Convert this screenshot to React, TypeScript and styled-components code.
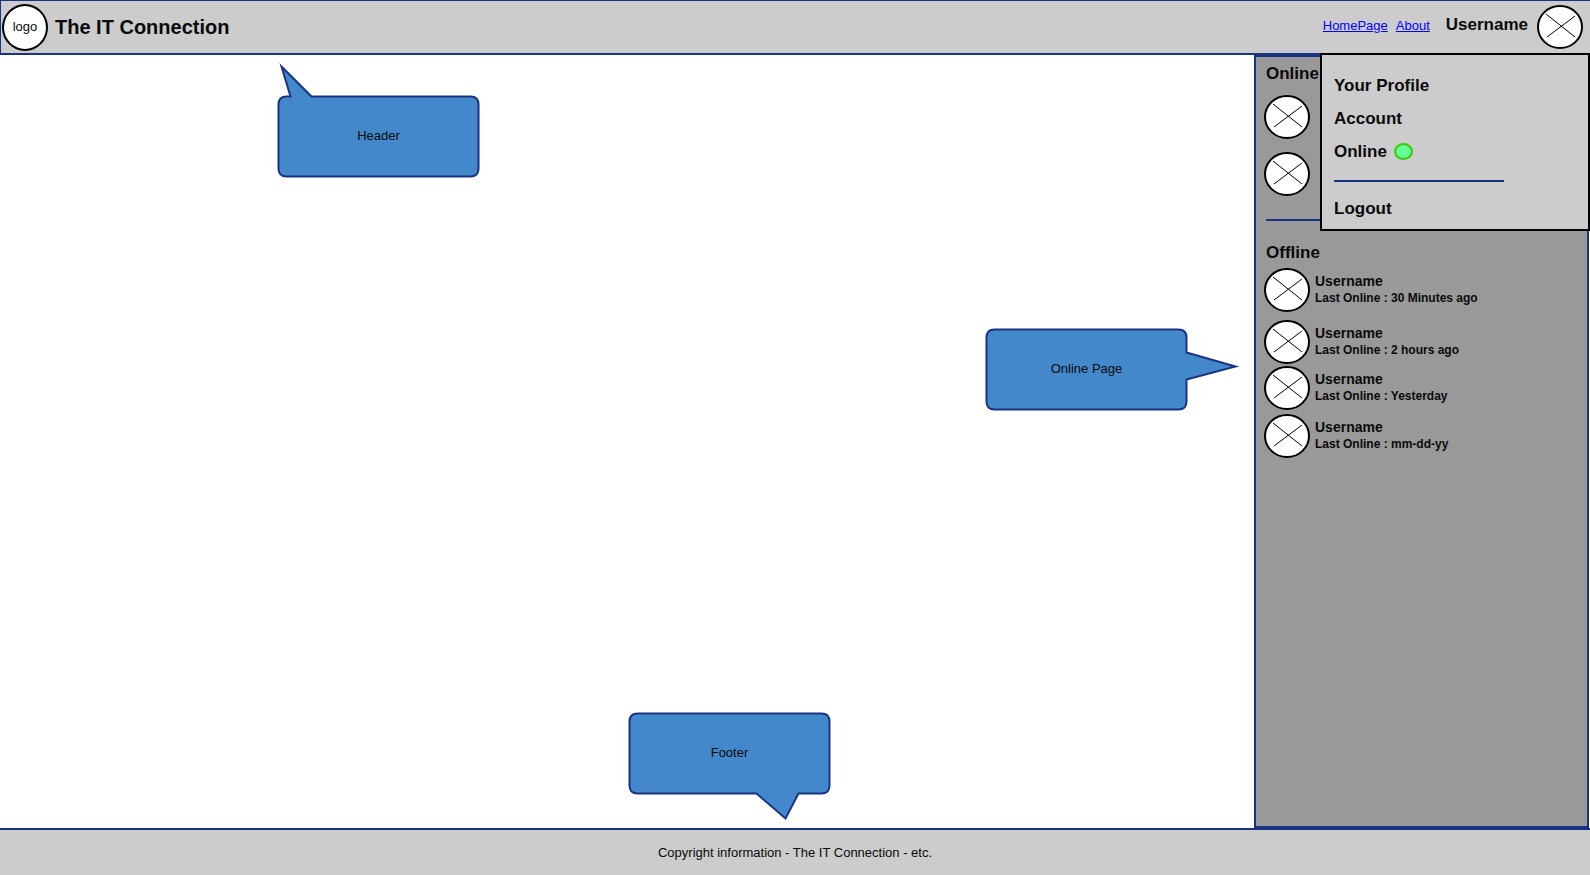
import React from "react";
import styled, { createGlobalStyle } from "styled-components";

const navy = "#1a3282";
const light = "#cccccc";
const grey = "#999999";

const GlobalStyle = createGlobalStyle`
  *, *::before, *::after { box-sizing: border-box; }
  body {
    margin: 0;
    background: #ffffff;
    color: #0a0a0a;
    font-family: "Liberation Sans", Arial, sans-serif;
    font-size: 13px;
    line-height: 16px;
  }
  h1, h2, ul, p { margin: 0; padding: 0; }
  ul { list-style: none; }
  button {
    margin: 0;
    padding: 0;
    border: 0;
    background: none;
    color: inherit;
    font: inherit;
    text-align: left;
    cursor: pointer;
  }
`;

const Page = styled.div`
  display: flex;
  flex-direction: column;
  min-height: 100vh;
`;

const Header = styled.header`
  position: relative;
  z-index: 2;
  display: flex;
  align-items: center;
  height: 55px;
  padding: 0 7px 0 1px;
  background: ${light};
  border: 1px solid ${navy};
  border-right: 0;
  border-bottom-width: 2px;
`;

const Logo = styled.div`
  display: flex;
  align-items: center;
  justify-content: center;
  width: 46px;
  height: 47px;
  border: 2px solid #000000;
  border-radius: 50%;
  background: #ffffff;
`;

const SiteTitle = styled.h1`
  flex: 1;
  margin-left: 7px;
  font-size: 20px;
  line-height: 24px;
`;

const Nav = styled.nav`
  display: flex;
  align-items: baseline;
  gap: 8px;
  padding-bottom: 4px;
`;

const NavLink = styled.a`
  color: #0000ff;
  text-decoration: underline;
`;

const UserButton = styled.button`
  margin-left: 8px;
  font-size: 17px;
  font-weight: bold;
  line-height: 20px;
`;

const AvatarButton = styled.button`
  display: flex;
  margin-left: 9px;
`;

const AvatarSvg = styled.svg`
  display: block;
  flex: none;
`;

const Menu = styled.div`
  position: absolute;
  top: 100%;
  right: 0;
  width: 270px;
  padding: 14px 12px 4px;
  background: ${light};
  border: 2px solid #000000;
`;

const MenuItem = styled.button`
  display: flex;
  align-items: center;
  gap: 7px;
  width: 100%;
  font-size: 17px;
  font-weight: bold;
  line-height: 33px;
`;

const StatusDot = styled.span`
  width: 19px;
  height: 17px;
  border: 2px solid #33cc00;
  border-radius: 50%;
  background: #66ff99;
`;

const MenuRule = styled.hr`
  width: 170px;
  height: 2px;
  margin: 12px 0 10px;
  border: 0;
  background: ${navy};
`;

const Body = styled.div`
  display: flex;
  flex: 1;
`;

const Canvas = styled.main`
  position: relative;
  flex: 1;
`;

const Sidebar = styled.aside`
  width: 335px;
  margin-right: 1px;
  padding: 7px 8px;
  background: ${grey};
  border: 2px solid ${navy};
`;

const SectionTitle = styled.h2`
  padding-left: 2px;
  font-size: 17px;
  line-height: 20px;
`;

const OnlineList = styled.ul`
  display: flex;
  flex-direction: column;
  gap: 13px;
  margin-top: 11px;
`;

const SidebarRule = styled.hr`
  width: 170px;
  height: 2px;
  margin: 23px 2px 22px;
  border: 0;
  background: ${navy};
`;

const OfflineList = styled.ul`
  margin-top: 5px;
`;

const UserRow = styled.li<{ $after: number }>`
  display: flex;
  align-items: center;
  gap: 5px;
  margin-bottom: ${(p) => p.$after}px;
`;

const UserText = styled.div`
  font-weight: bold;
`;

const UserName = styled.p`
  font-size: 14px;
`;

const LastOnline = styled.p`
  font-size: 12px;
  line-height: 18px;
`;

const Footer = styled.footer`
  display: flex;
  align-items: center;
  justify-content: center;
  height: 47px;
  background: ${light};
  border-top: 2px solid ${navy};
`;

const Note = styled.div<{ $top?: number; $bottom?: number; $left?: number; $right?: number }>`
  position: absolute;
  top: ${(p) => (p.$top === undefined ? "auto" : `${p.$top}px`)};
  bottom: ${(p) => (p.$bottom === undefined ? "auto" : `${p.$bottom}px`)};
  left: ${(p) => (p.$left === undefined ? "auto" : `${p.$left}px`)};
  right: ${(p) => (p.$right === undefined ? "auto" : `${p.$right}px`)};
  display: flex;
  align-items: center;
  justify-content: center;
  width: 201px;
  height: 81px;
  padding-bottom: 2px;
`;

const NoteShape = styled.svg`
  position: absolute;
  top: 0;
  left: 0;
  overflow: visible;
`;

const NoteLabel = styled.span`
  position: relative;
`;

function Avatar() {
  return (
    <AvatarSvg width="46" height="44" viewBox="0 0 46 44" aria-hidden="true">
      <ellipse cx="23" cy="22" rx="22" ry="21" fill="#ffffff" stroke="#000000" strokeWidth="2" />
      <path d="M9 9L38 32M10 32L38 11" stroke="#000000" fill="none" />
    </AvatarSvg>
  );
}

type CalloutProps = {
  label: string;
  shape: string;
  top?: number;
  bottom?: number;
  left?: number;
  right?: number;
};

function Callout({ label, shape, top, bottom, left, right }: CalloutProps) {
  return (
    <Note $top={top} $bottom={bottom} $left={left} $right={right}>
      <NoteShape width="201" height="81" aria-hidden="true">
        <path d={shape} transform="translate(0.5 0.5)" fill="#4488cc" stroke={navy} strokeWidth="2" strokeMiterlimit="10" />
      </NoteShape>
      <NoteLabel>{label}</NoteLabel>
    </Note>
  );
}

const headerShape =
  "M8 0H12L3 -30L33 0H192Q200 0 200 8V72Q200 80 192 80H8Q0 80 0 72V8Q0 0 8 0Z";
const sideShape =
  "M8 0H192Q200 0 200 8V23L249 37L200 50V72Q200 80 192 80H8Q0 80 0 72V8Q0 0 8 0Z";
const footerShape =
  "M8 0H192Q200 0 200 8V72Q200 80 192 80H169L156 105L127 80H8Q0 80 0 72V8Q0 0 8 0Z";

const offlineUsers = [
  { seen: "30 Minutes ago", after: 8 },
  { seen: "2 hours ago", after: 2 },
  { seen: "Yesterday", after: 4 },
  { seen: "mm-dd-yy", after: 0 },
];

export default function App() {
  return (
    <Page>
      <GlobalStyle />
      <Header>
        <Logo>logo</Logo>
        <SiteTitle>The IT Connection</SiteTitle>
        <Nav>
          <NavLink href="#home">HomePage</NavLink>
          <NavLink href="#about">About</NavLink>
          <UserButton type="button" aria-expanded="true">Username</UserButton>
        </Nav>
        <AvatarButton type="button" aria-label="User menu">
          <Avatar />
        </AvatarButton>
        <Menu>
          <MenuItem type="button">Your Profile</MenuItem>
          <MenuItem type="button">Account</MenuItem>
          <MenuItem type="button">
            Online
            <StatusDot />
          </MenuItem>
          <MenuRule />
          <MenuItem type="button">Logout</MenuItem>
        </Menu>
      </Header>
      <Body>
        <Canvas>
          <Callout label="Header" shape={headerShape} top={41} left={278} />
          <Callout label="Online Page" shape={sideShape} top={274} right={67} />
          <Callout label="Footer" shape={footerShape} bottom={34} right={424} />
        </Canvas>
        <Sidebar>
          <SectionTitle>Online</SectionTitle>
          <OnlineList>
            <li><Avatar /></li>
            <li><Avatar /></li>
          </OnlineList>
          <SidebarRule />
          <SectionTitle>Offline</SectionTitle>
          <OfflineList>
            {offlineUsers.map((user) => (
              <UserRow key={user.seen} $after={user.after}>
                <Avatar />
                <UserText>
                  <UserName>Username</UserName>
                  <LastOnline>Last Online : {user.seen}</LastOnline>
                </UserText>
              </UserRow>
            ))}
          </OfflineList>
        </Sidebar>
      </Body>
      <Footer>Copyright information - The IT Connection - etc.</Footer>
    </Page>
  );
}
